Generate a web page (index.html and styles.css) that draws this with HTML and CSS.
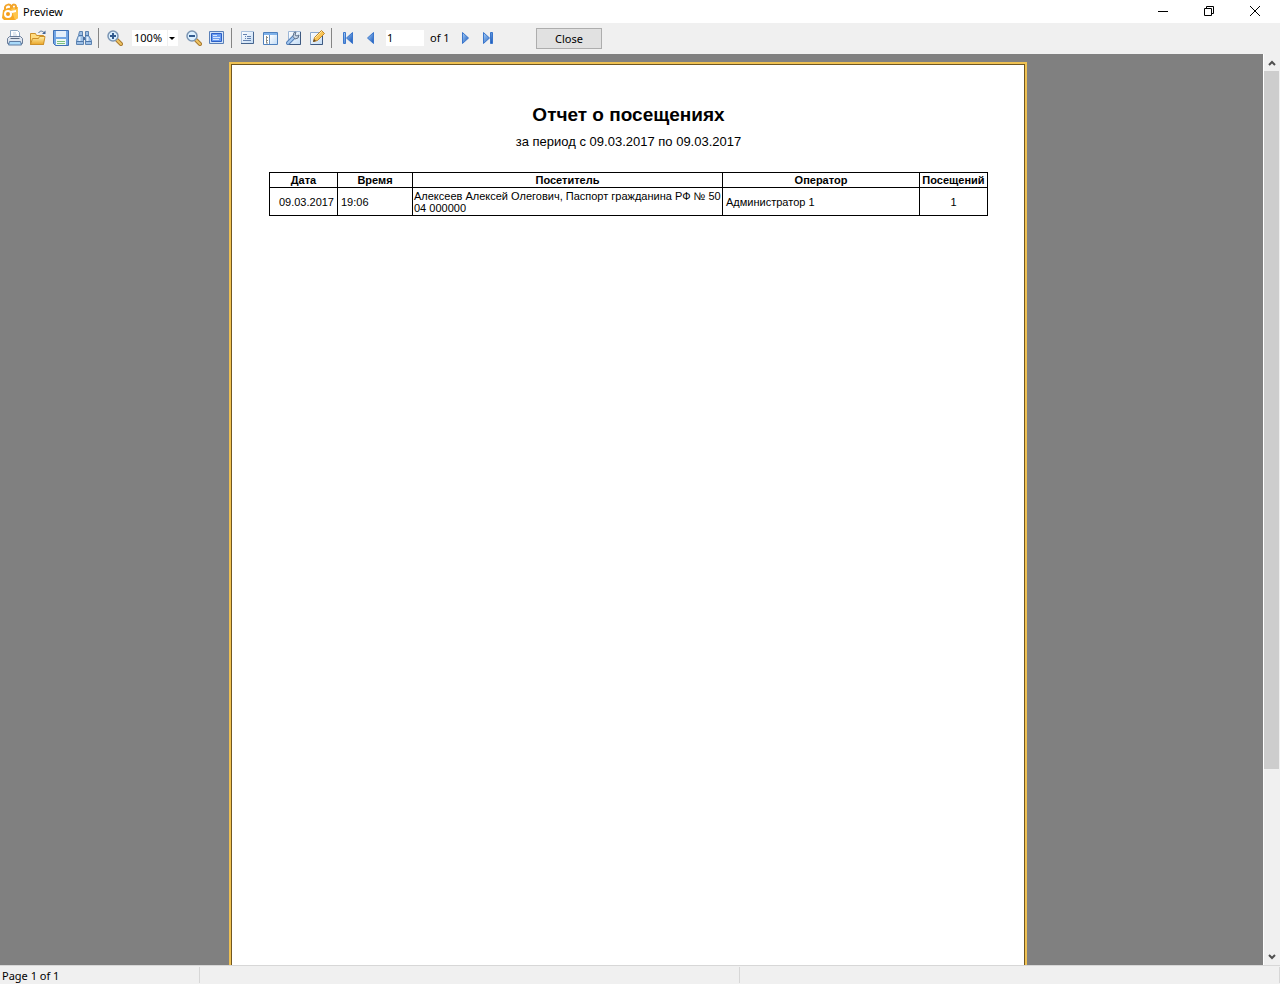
FILE: index.html
```
<!DOCTYPE html>
<html lang="ru">
  <head>
    <meta charset="utf-8">
    <title>Preview</title>
    <link rel="stylesheet" href="styles.css">
  </head>

  <body>
    <svg width="0" height="0" class="defs" aria-hidden="true">
      <defs>
        <linearGradient id="blue" x1="0" y1="0" x2="1" y2="1">
          <stop offset="0" stop-color="#a9d2fa"/>
          <stop offset="1" stop-color="#1453b8"/>
        </linearGradient>
        <linearGradient id="sheet" x1="0" y1="0" x2="1" y2="1">
          <stop offset="0" stop-color="#ffffff"/>
          <stop offset="1" stop-color="#c3dcf5"/>
        </linearGradient>
        <linearGradient id="gold" x1="0" y1="0" x2="0" y2="1">
          <stop offset="0" stop-color="#fff0ac"/>
          <stop offset="1" stop-color="#eaa628"/>
        </linearGradient>
      </defs>
    </svg>

    <header class="titlebar">
      <svg class="logo" width="18" height="18" viewBox="0 0 18 18">
        <path d="M1 7l5-2 10-1v11l-3 2H2l-2-2z" fill="#f7a823"/>
        <path d="M9 6l7-2v11l-3 2z" fill="#ffc64b"/>
        <path d="M3 7V4c1-3 5-3 6-1v2M10 5V3c1-2 4-2 4 1v2" fill="none" stroke="#f3a52b" stroke-width="2"/>
        <circle cx="6" cy="11" r="3" fill="#f39b18" stroke="#fff" stroke-width="2"/>
        <path d="M8 8l6-1v2l-4 1z" fill="#fff"/>
      </svg>
      <span class="caption">Preview</span>
      <button class="winbtn" aria-label="Minimize"><svg width="10" height="10"><path d="M0 5.500h10" stroke="#000"/></svg></button>
      <button class="winbtn" aria-label="Restore"><svg width="10" height="10" fill="none" stroke="#000"><path d="M.5 2.500h7v7h-7zM2.500 2.500v-2h7v7h-2"/></svg></button>
      <button class="winbtn" aria-label="Close window"><svg width="10" height="10"><path d="M0 0l10 10M10 0L0 10" stroke="#000"/></svg></button>
    </header>

    <div class="toolbar">
      <button class="tool" aria-label="Print"><svg width="16" height="16" viewBox="0 0 16 16">
        <path d="M3.500 8.500v-8h7l2 2v6z" fill="#fff" stroke="#8fa9c4"/>
        <path d="M6 3h3M6 5h4" stroke="#c3d0de"/>
        <path d="M.5 8.500l2-2h11l2 2v5h-15z" fill="#dfe5ee" stroke="#6b7d98"/>
        <path d="M3.500 8.500h9" stroke="#5d6c82"/>
        <path d="M2.500 11.500h11l1 3.500h-13z" fill="#a9dafa" stroke="#5f7ca2"/>
      </svg></button>
      <button class="tool" aria-label="Open"><svg width="16" height="16" viewBox="0 0 16 16">
        <path d="M.5 14.500v-11h5l1 2h7v9z" fill="#ffdc80" stroke="#cd9029"/>
        <path d="M.5 14.500l2-6h6l1-2h5.500l-1.500 8z" fill="url(#gold)" stroke="#cd9029"/>
        <path d="M8.500 3c2-3 4-2 6 0" fill="none" stroke="#59779d"/>
        <path d="M12 4h3.500V.5z" fill="#426493"/>
      </svg></button>
      <button class="tool" aria-label="Save"><svg width="16" height="16" viewBox="0 0 16 16">
        <path d="M.5.5h15v15h-13l-2-2z" fill="#71a5e5" stroke="#3f70b4"/>
        <path d="M3 1h10v6H3z" fill="#e4effb"/>
        <path d="M3 9h10v6H3z" fill="#f0f8f2"/>
        <path d="M4 11.500h8M4 13.500h8" stroke="#7cc07f"/>
      </svg></button>
      <button class="tool" aria-label="Find"><svg width="16" height="16" viewBox="0 0 16 16">
        <path d="M3.500 1.500h3v4l1 2v7h-7v-4l2-5zM9.500 1.500h3v4l3 5v4h-6v-7z" fill="#9cbfe6" stroke="#5d83b0"/>
        <path d="M3 5.500h4M9 5.500h4M1 11.500h6M10 11.500h5" stroke="#4f78aa"/>
        <path d="M3.500 7v4M11.500 7v4" stroke="#e4f0fc" stroke-width="2"/>
        <path d="M7 7h2v3H7z" fill="#4a6e9e"/>
      </svg></button>
      <span class="sep"></span>
      <button class="tool" aria-label="Zoom in"><svg width="16" height="16" viewBox="0 0 16 16">
        <path d="M10 10l4 4" stroke="#a9792f" stroke-width="4" stroke-linecap="round"/>
        <path d="M10 10l4 4" stroke="#efc565" stroke-width="2" stroke-linecap="round"/>
        <circle cx="6" cy="6" r="5" fill="#dcf0ff" stroke="#7b95b3" stroke-width="1.500"/>
        <path d="M3 6h6M6 3v6" stroke="#315a8e" stroke-width="2"/>
      </svg></button>
      <div class="zoom">
        <select aria-label="Zoom">
          <option>50%</option>
          <option selected>100%</option>
          <option>200%</option>
        </select>
        <svg class="drop" width="11" height="16"><path d="M.5 0v16" stroke="#f0f0f0"/><path d="M2 7h6l-3 3z"/></svg>
      </div>
      <button class="tool" aria-label="Zoom out"><svg width="16" height="16" viewBox="0 0 16 16">
        <path d="M10 10l4 4" stroke="#a9792f" stroke-width="4" stroke-linecap="round"/>
        <path d="M10 10l4 4" stroke="#efc565" stroke-width="2" stroke-linecap="round"/>
        <circle cx="6" cy="6" r="5" fill="#dcf0ff" stroke="#7b95b3" stroke-width="1.500"/>
        <path d="M3 6h6" stroke="#315a8e" stroke-width="2"/>
      </svg></button>
      <button class="tool" aria-label="Full screen"><svg width="16" height="16" viewBox="0 0 16 16">
        <path d="M.5 1.500h14v12H.5z" fill="#d3e4f9" stroke="#5a80b8"/>
        <path d="M2.500 3.500h10v8h-10z" fill="#6c9df0" stroke="#2c5fc6"/>
        <path d="M4 5.500h4M4 7.500h7M4 9.500h6" stroke="#d6e6fd"/>
      </svg></button>
      <span class="sep"></span>
      <button class="tool" aria-label="Outline"><svg width="16" height="16" viewBox="0 0 16 16">
        <path d="M1.500 1.500h12v12h-12z" fill="url(#sheet)" stroke="#a9c1de"/>
        <path d="M13.500 2v11.500H1" fill="none" stroke="#47658e"/>
        <path d="M3 4.500h4M5 6.500h1M7 6.500h4M5 8.500h1M7 8.500h4M3 10.500h8" stroke="#6482b0"/>
      </svg></button>
      <button class="tool" aria-label="Thumbnails"><svg width="16" height="16" viewBox="0 0 16 16">
        <path d="M.5 2.500h14v12H.5z" fill="#fff" stroke="#4e80bd"/>
        <path d="M1 3h13v2H1z" fill="#7fb2ea"/>
        <path d="M6.500 5v9" stroke="#6a94c4"/>
        <path d="M3.500 6v7M3 7.500h2M3 10.500h2M3 13h2" stroke="#8c8c83"/>
        <path d="M7 5h7v9H7z" fill="url(#sheet)"/>
      </svg></button>
      <button class="tool" aria-label="Page settings"><svg width="16" height="16" viewBox="0 0 16 16">
        <path d="M2.500 1.500h12v13h-12z" fill="url(#sheet)" stroke="#9cb6d6"/>
        <path d="M14.500 2v12.500H2" fill="none" stroke="#3e5980"/>
        <path d="M2 13l6-6" stroke="#537fb8" stroke-width="4" stroke-linecap="round"/>
        <path d="M2 13l6-6" stroke="#a4c8ef" stroke-width="2" stroke-linecap="round"/>
        <path d="M8 2.500l-1 4 2 2.500 3-1 1-3-2 1-2-1 1-3z" fill="#c8d5e5" stroke="#60758f"/>
      </svg></button>
      <button class="tool" aria-label="Edit page"><svg width="16" height="16" viewBox="0 0 16 16">
        <path d="M1.500 2.500h12v12h-12z" fill="url(#sheet)" stroke="#8da9cd"/>
        <path d="M13.500 5v9.500h-12" fill="none" stroke="#3e5980"/>
        <path d="M4.500 11.500l1-4 7-7 3 3-7 7z" fill="#f8c456" stroke="#c18424"/>
        <path d="M6 8l7-7" stroke="#ffe9a4"/>
        <path d="M4 12l1-3 2 2z" fill="#5d4528"/>
      </svg></button>
      <span class="sep"></span>
      <button class="tool" aria-label="First page"><svg width="16" height="16" viewBox="0 0 16 16" fill="url(#blue)" stroke="#3a76cc">
        <path d="M3.500 2.500h2v11h-2zM12.500 2.500v11l-6-5.500z"/>
      </svg></button>
      <button class="tool" aria-label="Previous page"><svg width="16" height="16" viewBox="0 0 16 16" fill="url(#blue)" stroke="#3a76cc">
        <path d="M10.500 2.500v11L4.500 8z"/>
      </svg></button>
      <input class="pageno" type="text" value="1" aria-label="Page number">
      <span class="total">of 1</span>
      <button class="tool" aria-label="Next page"><svg width="16" height="16" viewBox="0 0 16 16" fill="url(#blue)" stroke="#3a76cc">
        <path d="M5.500 2.500v11l6-5.500z"/>
      </svg></button>
      <button class="tool" aria-label="Last page"><svg width="16" height="16" viewBox="0 0 16 16" fill="url(#blue)" stroke="#3a76cc">
        <path d="M3.500 2.500v11l6-5.500zM10.500 2.500h2v11h-2z"/>
      </svg></button>
      <button class="close">Close</button>
    </div>

    <main class="viewer">
      <div class="canvas">
        <article class="page">
          <h1>Отчет о посещениях</h1>
          <p class="period">за период с 09.03.2017 по 09.03.2017</p>
          <table class="report">
            <colgroup>
              <col class="date"><col class="time"><col class="visitor"><col class="operator"><col class="visits">
            </colgroup>
            <thead>
              <tr><th>Дата</th><th>Время</th><th>Посетитель</th><th>Оператор</th><th>Посещений</th></tr>
            </thead>
            <tbody>
              <tr>
                <td class="right">09.03.2017</td>
                <td>19:06</td>
                <td class="name">Алексеев Алексей Олегович, Паспорт гражданина РФ № 50<br>04 000000</td>
                <td>Администратор 1</td>
                <td class="center">1</td>
              </tr>
            </tbody>
          </table>
        </article>
      </div>
      <div class="scrollbar">
        <button class="arrow" aria-label="Scroll up"><svg width="8" height="6"><path d="M1 5l3-3 3 3" fill="none" stroke="#505050" stroke-width="2"/></svg></button>
        <div class="thumb"></div>
        <div class="track"></div>
        <button class="arrow" aria-label="Scroll down"><svg width="8" height="6"><path d="M1 1l3 3 3-3" fill="none" stroke="#505050" stroke-width="2"/></svg></button>
      </div>
    </main>

    <footer class="status">
      <span class="pane first">Page 1 of 1</span>
      <span class="pane second"></span>
      <span class="pane rest"></span>
    </footer>
  </body>
</html>
```

FILE: styles.css
```
* {
  box-sizing: border-box;
}
body {
  display: flex;
  flex-direction: column;
  height: 100vh;
  margin: 0;
  overflow: hidden;
  background: #f0f0f0;
  color: #000;
  font: 11px/16px "Noto Sans", sans-serif;
}
button {
  display: flex;
  align-items: center;
  justify-content: center;
  padding: 0;
  border: 0;
  background: none;
  color: inherit;
  font: inherit;
}
.defs {
  position: absolute;
}

/* title bar */
.titlebar {
  display: flex;
  align-items: center;
  height: 23px;
  padding: 0 2px;
  background: #fff;
}
.caption {
  flex: 1;
  padding-left: 3px;
}
.winbtn {
  width: 46px;
  height: 21px;
  margin-bottom: 2px;
}

/* toolbar */
.toolbar {
  display: flex;
  align-items: center;
  height: 31px;
  padding: 0 0 1px 3px;
}
.tool {
  width: 23px;
  height: 22px;
}
.sep {
  width: 1px;
  height: 20px;
  margin: 0 4px 0 3px;
  background: #858585;
}
.zoom {
  position: relative;
  width: 46px;
  height: 16px;
  margin: 0 4px 0 6px;
}
.zoom select {
  width: 100%;
  height: 16px;
  padding: 0 0 0 2px;
  border: 0;
  appearance: none;
  background: #fff;
  color: #000;
  font: inherit;
}
.drop {
  position: absolute;
  top: 0;
  right: 0;
  pointer-events: none;
}
.pageno {
  width: 38px;
  height: 16px;
  margin: 0 6px 0 4px;
  padding: 0 1px;
  border: 0;
  font: inherit;
}
.total {
  width: 23px;
  white-space: nowrap;
}
.close {
  width: 66px;
  height: 21px;
  margin: 1px 0 0 37px;
  border: 1px solid #adadad;
  background: #e1e1e1;
}

/* preview area */
.viewer {
  display: flex;
  flex: 1;
  min-height: 0;
  background: #808080;
}
.canvas {
  flex: 1;
  padding: 8px 7px 0 0;
  overflow: hidden;
}
.page {
  width: 798px;
  min-height: 1128px;
  margin: 0 auto;
  padding: 39px 37px 37px 38px;
  border: 2px solid #efc152;
  box-shadow: inset 0 0 0 1px #705722;
  background: #fff;
  font-family: "Liberation Sans", Arial, sans-serif;
}
.page h1 {
  margin: 0 0 6px;
  font-size: 19px;
  line-height: 24px;
  text-align: center;
}
.period {
  margin: 0 0 21px;
  font-size: 13px;
  line-height: 18px;
  text-align: center;
}
.report {
  width: 100%;
  border-collapse: collapse;
  table-layout: fixed;
  font-size: 11px;
  line-height: 12px;
}
.report th,
.report td {
  border: 1px solid #000;
  text-align: left;
}
.report th {
  padding: 1px 0;
  text-align: center;
}
.report td {
  padding: 2px 3px 1px;
}
.report .name {
  padding: 2px 0 1px 1px;
  white-space: nowrap;
}
.report .right {
  text-align: right;
}
.report .center {
  text-align: center;
}
.date {
  width: 68px;
}
.time {
  width: 75px;
}
.visitor {
  width: 310px;
}
.operator {
  width: 197px;
}

.scrollbar {
  display: flex;
  flex-direction: column;
  width: 17px;
  border-left: 1px solid #fff;
  background: #f0f0f0;
}
.arrow {
  height: 17px;
}
.thumb {
  flex: 39;
  margin-right: 1px;
  background: #cdcdcd;
}
.track {
  flex: 10;
}

/* status bar */
.status {
  display: flex;
  height: 19px;
  padding: 1px 0;
  border-top: 1px solid #d7d7d7;
}
.pane {
  padding: 1px 2px;
  border-right: 1px solid #d7d7d7;
}
.first {
  width: 200px;
}
.second {
  width: 540px;
}
.rest {
  flex: 1;
}
```
